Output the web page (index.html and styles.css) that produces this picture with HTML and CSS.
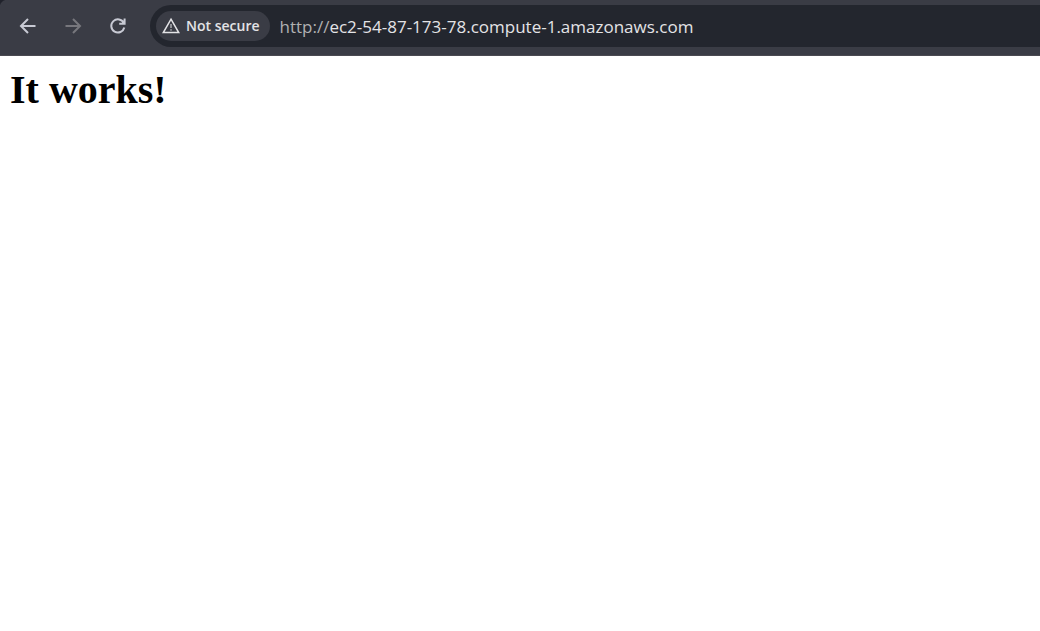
FILE: index.html
```html
<!DOCTYPE html>
<html lang="en">
<head>
<meta charset="utf-8">
<title>It works!</title>
<link rel="stylesheet" href="styles.css">
</head>
<body>
<header class="toolbar">
  <nav class="nav-buttons" aria-label="Navigation">
    <button class="nav-button" type="button" aria-label="Back">
      <svg class="icon" viewBox="0 0 20 20"><path d="M17.5 10H3.5M10 3L3 10L10 17"/></svg>
    </button>
    <button class="nav-button" type="button" aria-label="Forward" disabled>
      <svg class="icon" viewBox="0 0 20 20"><path d="M2.5 10H16.5M10 3L17 10L10 17"/></svg>
    </button>
    <button class="nav-button" type="button" aria-label="Reload">
      <svg class="icon" viewBox="0 0 20 20"><path d="M15.8 7A6.6 6.6 0 1 0 16.3 11.5M16.6 2.5V7.8H11.2M16 4.5V7.2L14 7.2"/></svg>
    </button>
  </nav>
  <form class="omnibox">
    <button class="security" type="button">
      <svg class="warning" viewBox="0 0 18 18"><path d="M9 2.2L16.7 15.5H1.3Z"/><path class="mark" d="M9 7V11M9 12.2V13.7"/></svg>
      <span>Not secure</span>
    </button>
    <label class="scheme" for="address">http://</label>
    <input class="address" id="address" type="text" spellcheck="false" value="ec2-54-87-173-78.compute-1.amazonaws.com">
  </form>
</header>
<main class="page">
  <h1 class="heading">It works!</h1>
</main>
</body>
</html>
```
FILE: styles.css
```css
* {
  box-sizing: border-box;
}

body {
  margin: 0;
  background: #fff;
}

.toolbar {
  display: flex;
  align-items: center;
  gap: 15px;
  height: 56px;
  padding: 0 0 4px 10px;
  border-bottom: 1px solid #4a4a51;
  background: radial-gradient(circle at 8px 8px, #3a3c45 8px, #20222b 9px) 0 0 / 8px 8px no-repeat, #3a3c45;
  font-family: "Segoe UI", "Open Sans", "Noto Sans", sans-serif;
}

.nav-buttons {
  display: flex;
  gap: 10px;
}

.nav-button {
  display: grid;
  place-items: center;
  width: 35px;
  height: 35px;
  padding: 0;
  border: 0;
  border-radius: 50%;
  background: none;
  color: #c8cad4;
}

.nav-button:disabled {
  color: #77777d;
}

.icon {
  width: 20px;
  height: 20px;
  fill: none;
  stroke: currentColor;
  stroke-width: 2;
}

.omnibox {
  display: flex;
  flex: 1;
  align-items: center;
  min-width: 0;
  height: 42px;
  margin: 0;
  padding-left: 6px;
  border-radius: 21px 0 0 21px;
  background: #23262e;
}

.security {
  display: flex;
  flex: none;
  align-items: center;
  gap: 6px;
  height: 30px;
  padding: 0 10px 0 6px;
  border: 0;
  border-radius: 15px;
  background: #3a3c45;
  color: #e3e3e6;
  font: 600 14px/30px "Segoe UI", "Open Sans", "Noto Sans", sans-serif;
}

.warning {
  width: 18px;
  height: 18px;
  fill: none;
  stroke: currentColor;
  stroke-width: 1.5;
}

.mark {
  stroke-width: 1;
}

.scheme,
.address {
  padding: 2px 0 0;
  font: 400 17px/24px "Segoe UI", "Open Sans", "Noto Sans", sans-serif;
}

.scheme {
  margin-left: 10px;
  color: #b0b0b2;
}

.address {
  flex: 1;
  min-width: 0;
  border: 0;
  outline: 0;
  background: none;
  color: #e3e3e6;
}

.page {
  padding: 10px;
}

.heading {
  margin: 0;
  color: #000;
  font: 700 40px/48px "Liberation Serif", "Times New Roman", serif;
}
```
